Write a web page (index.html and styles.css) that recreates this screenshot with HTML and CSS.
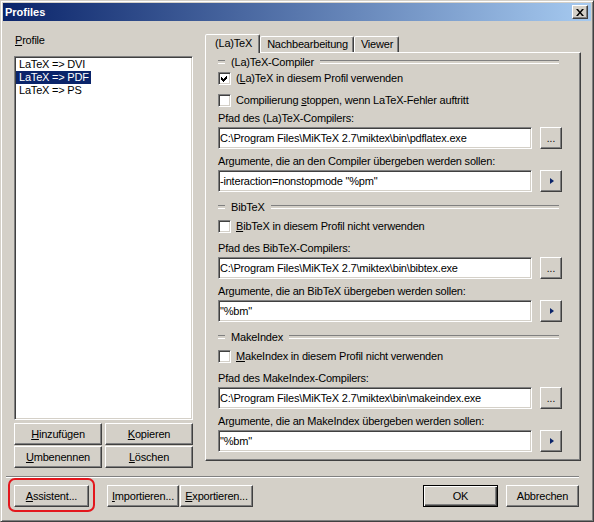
FILE: index.html
```html
<!DOCTYPE html>
<html lang="de">
<head>
<meta charset="utf-8">
<title>Profiles</title>
<link rel="stylesheet" href="styles.css">
</head>
<body>
<div class="window">
  <div class="titlebar">
    <span class="title">Profiles</span>
    <button class="close" aria-label="Schließen">
      <svg width="8" height="7" viewBox="0 0 8 7"><path d="M0 0h2l2 2.4L6 0h2L5 3.5 8 7H6L4 4.6 2 7H0l3-3.5z" fill="#000"/></svg>
    </button>
  </div>

  <div class="main">
    <div class="profiles">
      <div class="caption"><u>P</u>rofile</div>
      <div class="listbox">
        <div class="item"><span>LaTeX =&gt; DVI</span></div>
        <div class="item selected"><span>LaTeX =&gt; PDF</span></div>
        <div class="item"><span>LaTeX =&gt; PS</span></div>
      </div>
      <div class="profile-buttons">
        <button class="btn"><u>H</u>inzufügen</button>
        <button class="btn"><u>K</u>opieren</button>
        <button class="btn"><u>U</u>mbenennen</button>
        <button class="btn"><u>L</u>öschen</button>
      </div>
    </div>

    <div class="tabs-area">
      <div class="tabs">
        <div class="tab active">(La)TeX</div>
        <div class="tab">Nachbearbeitung</div>
        <div class="tab">Viewer</div>
      </div>
      <div class="panel">
        <div class="group group-first">
          <div class="group-head"><span>(La)TeX-Compiler</span></div>
          <div class="check">
            <span class="box"><svg width="9" height="9" viewBox="0 0 9 9"><path d="M1 3l2 2 4-4v3L3 8 1 6z" fill="#000"/></svg></span>
            <span>(<u>L</u>a)TeX in diesem Profil verwenden</span>
          </div>
          <div class="check">
            <span class="box"></span>
            <span>Compilierung <u>s</u>toppen, wenn LaTeX-Fehler auftritt</span>
          </div>
          <div class="field-label">Pfad des (La)TeX-Compilers:</div>
          <div class="field">
            <input class="textbox" type="text" readonly value="C:\Program Files\MiKTeX 2.7\miktex\bin\pdflatex.exe">
            <button class="btn side">...</button>
          </div>
          <div class="field-label">Argumente, die an den Compiler übergeben werden sollen:</div>
          <div class="field">
            <input class="textbox" type="text" readonly value="-interaction=nonstopmode &quot;%pm&quot;">
            <button class="btn side arrow"><span class="tri"></span></button>
          </div>
        </div>

        <div class="group">
          <div class="group-head"><span>BibTeX</span></div>
          <div class="check">
            <span class="box"></span>
            <span><u>B</u>ibTeX in diesem Profil nicht verwenden</span>
          </div>
          <div class="field-label">Pfad des BibTeX-Compilers:</div>
          <div class="field">
            <input class="textbox" type="text" readonly value="C:\Program Files\MiKTeX 2.7\miktex\bin\bibtex.exe">
            <button class="btn side">...</button>
          </div>
          <div class="field-label">Argumente, die an BibTeX übergeben werden sollen:</div>
          <div class="field">
            <input class="textbox" type="text" readonly value="&quot;%bm&quot;">
            <button class="btn side arrow"><span class="tri"></span></button>
          </div>
        </div>

        <div class="group">
          <div class="group-head"><span>MakeIndex</span></div>
          <div class="check">
            <span class="box"></span>
            <span><u>M</u>akeIndex in diesem Profil nicht verwenden</span>
          </div>
          <div class="field-label">Pfad des MakeIndex-Compilers:</div>
          <div class="field">
            <input class="textbox" type="text" readonly value="C:\Program Files\MiKTeX 2.7\miktex\bin\makeindex.exe">
            <button class="btn side">...</button>
          </div>
          <div class="field-label">Argumente, die an MakeIndex übergeben werden sollen:</div>
          <div class="field">
            <input class="textbox" type="text" readonly value="&quot;%bm&quot;">
            <button class="btn side arrow"><span class="tri"></span></button>
          </div>
        </div>
      </div>
    </div>
  </div>

  <div class="separator"></div>

  <div class="footer">
    <div class="footer-left">
      <span class="highlight"><button class="btn w-assist"><u>A</u>ssistent...</button></span>
      <button class="btn w-import"><u>I</u>mportieren...</button>
      <button class="btn w-export"><u>E</u>xportieren...</button>
    </div>
    <div class="footer-right">
      <button class="btn default w-ok">OK</button>
      <button class="btn w-cancel">Abbrechen</button>
    </div>
  </div>
</div>
</body>
</html>
```

FILE: styles.css
```css
* { box-sizing: border-box; }

html, body {
  margin: 0;
  padding: 0;
  background: #d4d0c8;
}

body {
  font-family: "Liberation Sans", Arial, sans-serif;
  font-size: 11px;
  letter-spacing: -0.2px;
  color: #000;
}

u { text-decoration: underline; text-underline-offset: 1px; }

.window {
  width: 594px;
  height: 522px;
  background: #d4d0c8;
  border: 1px solid;
  border-color: #d4d0c8 #404040 #404040 #d4d0c8;
  box-shadow: inset 1px 1px 0 #fff, inset -1px -1px 0 #808080;
  padding: 2px;
}

/* title bar */
.titlebar {
  height: 18px;
  background: linear-gradient(to right, #0a246a, #a6caf0);
  display: flex;
  align-items: center;
  justify-content: space-between;
  padding: 0 3px 0 2px;
}
.title {
  color: #fff;
  font-weight: bold;
  letter-spacing: 0;
  line-height: 18px;
}
.close {
  width: 16px;
  height: 14px;
  padding: 0;
  margin: 0;
  background: #d4d0c8;
  border: 1px solid;
  border-color: #fff #404040 #404040 #fff;
  box-shadow: inset -1px -1px 0 #808080;
  display: flex;
  align-items: center;
  justify-content: center;
}
.close svg { display: block; margin-left: -1px; }

/* generic button */
.btn {
  font: inherit;
  letter-spacing: inherit;
  color: #000;
  margin: 0;
  padding: 0;
  height: 22px;
  background: #d4d0c8;
  border: 1px solid;
  border-color: #fff #404040 #404040 #fff;
  box-shadow: inset -1px -1px 0 #808080;
  line-height: 18px;
  text-align: center;
}
.btn.default {
  border-color: #000;
  box-shadow: inset 1px 1px 0 #fff, inset -1px -1px 0 #404040, inset -2px -2px 0 #808080;
}

/* main area */
.main {
  display: flex;
  align-items: flex-start;
  padding-left: 11px;
  gap: 12px;
  height: 447px;
}

.profiles {
  width: 179px;
  margin-top: 12px;
}
.caption {
  line-height: 14px;
  padding-left: 1px;
}
.listbox {
  margin-top: 9px;
  height: 364px;
  background: #fff;
  border: 1px solid;
  border-color: #808080 #fff #fff #808080;
  box-shadow: inset 1px 1px 0 #404040, inset -1px -1px 0 #d4d0c8;
  padding: 1px 0 0 1px;
}
.item {
  height: 13px;
  line-height: 13px;
}
.item span {
  display: inline-block;
  padding: 0 2px 0 3px;
}
.item.selected span {
  background: #0a246a;
  color: #fff;
}
.profile-buttons {
  margin-top: 3px;
  display: grid;
  grid-template-columns: 88px 88px;
  column-gap: 3px;
  row-gap: 1px;
}

/* tabs */
.tabs-area {
  width: 376px;
  margin-top: 13px;
}
.tabs {
  display: flex;
  align-items: flex-end;
  height: 18px;
  position: relative;
  z-index: 1;
}
.tab {
  height: 16px;
  line-height: 15px;
  padding: 0 5px 0 6px;
  border: 1px solid;
  border-bottom: none;
  border-color: #fff #404040 transparent #fff;
  box-shadow: inset -1px 0 0 #808080;
  border-radius: 2px 2px 0 0;
  background: #d4d0c8;
}
.tab.active {
  height: 19px;
  margin-bottom: -1px;
  padding: 0 7px 0 9px;
  line-height: 17px;
}
.panel {
  height: 409px;
  border: 1px solid;
  border-color: #fff #404040 #404040 #fff;
  box-shadow: inset -1px -1px 0 #808080;
  padding: 0 18px 0 12px;
}

/* groups */
.group-first { padding-top: 2px; }
.group + .group { margin-top: 8px; }

.group-head {
  display: flex;
  align-items: center;
  height: 14px;
  line-height: 14px;
  gap: 6px;
  margin-right: 3px;
}
.group-head::before,
.group-head::after {
  content: "";
  height: 2px;
  border-top: 1px solid #808080;
  border-bottom: 1px solid #fff;
}
.group-head::before { width: 7px; }
.group-head::after { flex: 1; }

.check {
  display: flex;
  align-items: center;
  gap: 5px;
  height: 14px;
  line-height: 14px;
  margin-top: 5px;
}
.group-first .group-head + .check { margin-top: 2px; }
.check + .check { margin-top: 8px; }
.box {
  width: 13px;
  height: 13px;
  flex: none;
  background: #fff;
  border: 1px solid;
  border-color: #808080 #fff #fff #808080;
  box-shadow: inset 1px 1px 0 #404040, inset -1px -1px 0 #d4d0c8;
  padding: 1px;
}
.box svg { display: block; shape-rendering: crispEdges; }

.field-label {
  line-height: 14px;
  margin-top: 5px;
}
.check + .field-label { margin-top: 8px; }
.group-first .check + .field-label { margin-top: 4px; }

.field {
  display: flex;
  gap: 8px;
  margin-top: 2px;
  height: 22px;
}
.textbox {
  flex: 1;
  min-width: 0;
  height: 22px;
  margin: 0;
  padding: 0 1px;
  font: inherit;
  letter-spacing: inherit;
  color: #000;
  background: #fff;
  border: 1px solid;
  border-color: #808080 #fff #fff #808080;
  box-shadow: inset 1px 1px 0 #404040, inset -1px -1px 0 #d4d0c8;
  outline: none;
}
.btn.side {
  width: 22px;
  flex: none;
  line-height: 22px;
  font-size: 10px;
  letter-spacing: 0;
}
.btn.arrow {
  display: flex;
  align-items: center;
  justify-content: center;
}
.tri {
  width: 0;
  height: 0;
  border-top: 3.5px solid transparent;
  border-bottom: 3.5px solid transparent;
  border-left: 4px solid #0a246a;
  margin-left: 1px;
}

/* separator + footer */
.separator {
  margin: 8px 12px 0 3px;
  height: 2px;
  border-top: 1px solid #808080;
  border-bottom: 1px solid #fff;
}
.footer {
  margin-top: 7px;
  display: flex;
  justify-content: space-between;
  padding: 0 12px 0 11px;
}
.footer-left, .footer-right { display: flex; }
.w-assist { width: 75px; }
.w-import { width: 72px; margin-left: 18px; }
.w-export { width: 73px; margin-left: 1px; }
.w-ok { width: 75px; margin-right: 8px; }
.w-cancel { width: 73px; }

.highlight {
  position: relative;
  display: flex;
}
.highlight::after {
  content: "";
  position: absolute;
  left: -6px;
  top: -7px;
  right: -6px;
  bottom: -5px;
  border: 2px solid #e3161c;
  border-radius: 7px;
  pointer-events: none;
}
```
